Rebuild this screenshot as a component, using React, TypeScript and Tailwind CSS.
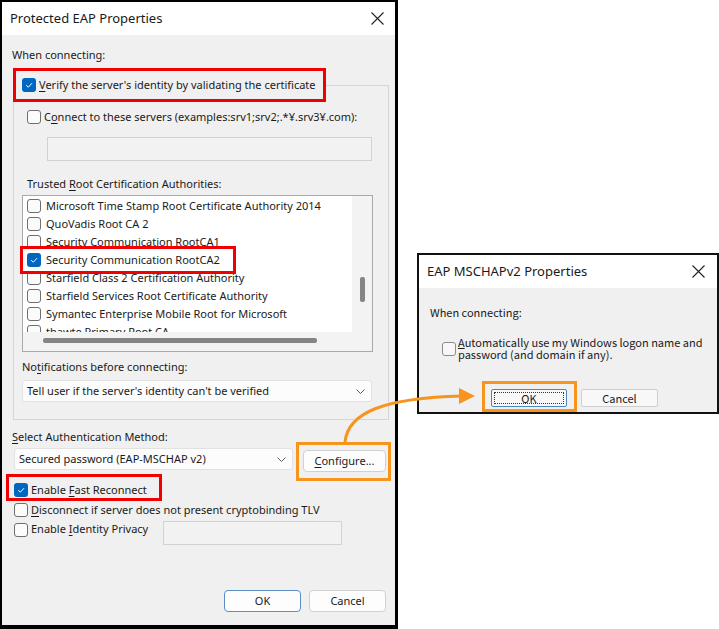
import React from "react";

function Check({ checked = false, light = false }: { checked?: boolean; light?: boolean }) {
  if (checked) {
    return (
      <span className="flex h-[14px] w-[14px] shrink-0 items-center justify-center rounded-[3px] bg-[#0067c0]">
        <svg width="10" height="10" viewBox="0 0 10 10">
          <path d="M2.2 5.2 L4.3 7.2 L8 3.2" fill="none" stroke="white" strokeWidth="1" />
        </svg>
      </span>
    );
  }
  return (
    <span
      className={
        light
          ? "block h-[14px] w-[14px] shrink-0 rounded-[3px] border border-[#8c8c8c] bg-[#f7f7f7]"
          : "block h-[14px] w-[14px] shrink-0 rounded-[3px] border border-[#6f6f6f] bg-[#fbfbfb]"
      }
    />
  );
}

function CloseX() {
  return (
    <svg width="13" height="13" viewBox="0 0 13 13">
      <path d="M0.5 0.5 L12.5 12.5 M12.5 0.5 L0.5 12.5" stroke="#222" strokeWidth="1.1" fill="none" />
    </svg>
  );
}

function Chevron() {
  return (
    <svg width="9" height="5" viewBox="0 0 9 5">
      <path d="M0.5 0.5 L4.5 4.5 L8.5 0.5" stroke="#5a5a5a" strokeWidth="1" fill="none" />
    </svg>
  );
}

const items = [
  { t: "Microsoft Time Stamp Root Certificate Authority 2014" },
  { t: "QuoVadis Root CA 2" },
  { t: "Security Communication RootCA1" },
  { t: "Security Communication RootCA2", c: true },
  { t: "Starfield Class 2 Certification Authority" },
  { t: "Starfield Services Root Certificate Authority" },
  { t: "Symantec Enterprise Mobile Root for Microsoft" },
  { t: "thawte Primary Root CA" },
];

function MainDialog() {
  return (
    <div className="flex h-[629px] w-[398px] shrink-0 flex-col border-t-2 border-l-2 border-r-[3px] border-b-[4px] border-black font-['Noto_Sans',sans-serif] text-[#1a1a1a]">
      <div className="flex h-[33px] items-center justify-between bg-white pl-[8px] pr-[11px]">
        <span className="text-[13px]">Protected EAP Properties</span>
        <CloseX />
      </div>
      <div className="flex flex-1 flex-col whitespace-nowrap bg-[#f0f0f0] text-[11px] leading-[16px]">
        <div className="ml-[10px] mt-[12px] h-[16px]">When connecting:</div>

        <div className="ml-[11px] mt-[22px] w-[376px] border border-[#d6d6d6] pb-[17px]">
          <div className="-mt-[9px] flex h-[16px] w-[309px] items-center gap-[3px] bg-[#f0f0f0] pl-[8px]">
            <Check checked />
            <span>
              <span className="underline underline-offset-2">V</span>erify the server's identity by validating the certificate
            </span>
          </div>
          <div className="ml-[13px] mt-[16px] flex h-[16px] items-center gap-[3px]">
            <Check />
            <span>
              C<span className="underline underline-offset-2">o</span>nnect to these servers (examples:srv1;srv2;.*¥.srv3¥.com):
            </span>
          </div>
          <div className="ml-[33px] mt-[12px] h-[24px] w-[325px] border border-[#d2d2d2] bg-[#f2f2f2]" />
          <div className="ml-[13px] mt-[15px] h-[16px]">
            Trusted <span className="underline underline-offset-2">R</span>oot Certification Authorities:
          </div>
          <div className="ml-[8px] mt-[3px] flex h-[157px] w-[351px] flex-col border border-[#a9a9a9]">
            <div className="flex h-[136px]">
              <div className="flex-1 overflow-hidden bg-white pt-[1px]">
                {items.map((it) => (
                  <div key={it.t} className="flex h-[18px] items-center gap-[5px] whitespace-nowrap pl-[4px]">
                    <Check checked={!!it.c} />
                    <span>{it.t}</span>
                  </div>
                ))}
              </div>
              <div className="w-[20px] bg-[#f3f3f3] pt-[81px]">
                <div className="ml-[8px] h-[25px] w-[5px] rounded-[2px] bg-[#858585]" />
              </div>
            </div>
            <div className="h-[19px] bg-[#f3f3f3] pt-[6px]">
              <div className="ml-[20px] h-[5px] w-[274px] rounded-[2px] bg-[#858585]" />
            </div>
          </div>
          <div className="ml-[8px] mt-[7px] h-[16px]">
            No<span className="underline underline-offset-2">t</span>ifications before connecting:
          </div>
          <div className="ml-[8px] mt-[5px] flex h-[22px] w-[350px] items-center justify-between rounded-[3px] border border-[#e2e2e2] bg-[#fcfcfc] pl-[4px] pr-[6px]">
            <span>Tell user if the server's identity can't be verified</span>
            <Chevron />
          </div>
        </div>

        <div className="ml-[10px] mt-[9px] h-[16px]">
          <span className="underline underline-offset-2">S</span>elect Authentication Method:
        </div>
        <div className="mt-[3px] flex items-start">
          <div className="ml-[12px] flex h-[22px] w-[279px] items-center justify-between rounded-[3px] border border-[#e2e2e2] bg-[#fcfcfc] pl-[4px] pr-[6px]">
            <span>Secured password (EAP-MSCHAP v2)</span>
            <Chevron />
          </div>
          <div className="ml-[10px] mt-[2px] flex h-[22px] w-[83px] items-center justify-center rounded-[4px] border border-[#d0d0d0] bg-[#fdfdfd]">
            <span>
              <span className="underline underline-offset-2">C</span>onfigure...
            </span>
          </div>
        </div>
        <div className="ml-[12px] mt-[10px] flex h-[16px] items-center gap-[3px]">
          <Check checked />
          <span>
            Enable <span className="underline underline-offset-2">F</span>ast Reconnect
          </span>
        </div>
        <div className="ml-[12px] mt-[4px] flex h-[16px] items-center gap-[3px]">
          <Check />
          <span>
            <span className="underline underline-offset-2">D</span>isconnect if server does not present cryptobinding TLV
          </span>
        </div>
        <div className="ml-[12px] mt-[4px] flex items-start">
          <div className="flex h-[16px] w-[149px] items-center gap-[3px]">
            <Check />
            <span className="-mt-[2px]">
              Enable <span className="underline underline-offset-2">I</span>dentity Privacy
            </span>
          </div>
          <div className="-mt-[1px] h-[24px] w-[179px] border border-[#d2d2d2] bg-[#f2f2f2]" />
        </div>

        <div className="mt-auto flex justify-end gap-[8px] pb-[13px] pr-[9px]">
          <div className="flex h-[22px] w-[77px] items-center justify-center rounded-[4px] border border-[#5b8fc4] bg-[#fdfdfd]">
            OK
          </div>
          <div className="flex h-[22px] w-[77px] items-center justify-center rounded-[4px] border border-[#d0d0d0] bg-[#fdfdfd]">
            Cancel
          </div>
        </div>
      </div>
    </div>
  );
}

function Popup() {
  return (
    <div className="ml-[19px] mt-[253px] flex h-[161px] w-[302px] shrink-0 flex-col border-2 border-[#111] text-[#1a1a1a]">
      <div className="flex h-[33px] items-center justify-between bg-white pl-[8px] pr-[12px] font-['Noto_Sans',sans-serif]">
        <span className="text-[13px]">EAP MSCHAPv2 Properties</span>
        <CloseX />
      </div>
      <div className="flex flex-1 flex-col whitespace-nowrap bg-[#f0f0f0] font-['Noto_Sans_CJK_JP',sans-serif] text-[11px] leading-[12px]">
        <div className="ml-[11px] mt-[17px] h-[14px] leading-[14px]">When connecting:</div>
        <div className="ml-[23px] mt-[17px] flex items-start gap-[2px]">
          <div className="mt-[6px]">
            <Check light />
          </div>
          <div>
            <div>
              <span className="underline underline-offset-1">A</span>utomatically use my Windows logon name and
            </div>
            <div>password (and domain if any).</div>
          </div>
        </div>
        <div className="ml-[72px] mt-[29px] flex">
          <div className="flex h-[18px] w-[76px] items-center justify-center rounded-[2px] border border-[#4a86bf] bg-[#f8f8f8] p-[2px]">
            <div className="flex h-full w-full items-center justify-center border border-dotted border-[#333]">OK</div>
          </div>
          <div className="ml-[14px] flex h-[18px] w-[77px] items-center justify-center rounded-[2px] border border-[#cfcfcf] bg-[#f8f8f8]">
            Cancel
          </div>
        </div>
      </div>
    </div>
  );
}

export default function App() {
  return (
    <div className="relative h-[629px] w-[719px] overflow-hidden bg-white">
      <div className="flex items-start">
        <MainDialog />
        <Popup />
      </div>

      <div className="pointer-events-none absolute left-[13px] top-[68px] h-[34px] w-[313px] border-[3px] border-[#f00000]" />
      <div className="pointer-events-none absolute left-[20px] top-[246px] h-[28px] w-[216px] border-[3px] border-[#f00000]" />
      <div className="pointer-events-none absolute left-[6px] top-[474px] h-[27px] w-[156px] border-[3px] border-[#f00000]" />
      <div className="pointer-events-none absolute left-[296px] top-[442px] h-[39px] w-[95px] border-[3px] border-[#f7941d]" />
      <div className="pointer-events-none absolute left-[482px] top-[381px] h-[31px] w-[95px] border-[3px] border-[#f7941d]" />

      <svg className="pointer-events-none absolute left-0 top-0" width="719" height="629" viewBox="0 0 719 629">
        <path d="M345 442 C348 412 385 398 462 396" fill="none" stroke="#f7941d" strokeWidth="3" />
        <polygon points="459,388 475,396 459,404" fill="#f7941d" />
      </svg>
    </div>
  );
}
